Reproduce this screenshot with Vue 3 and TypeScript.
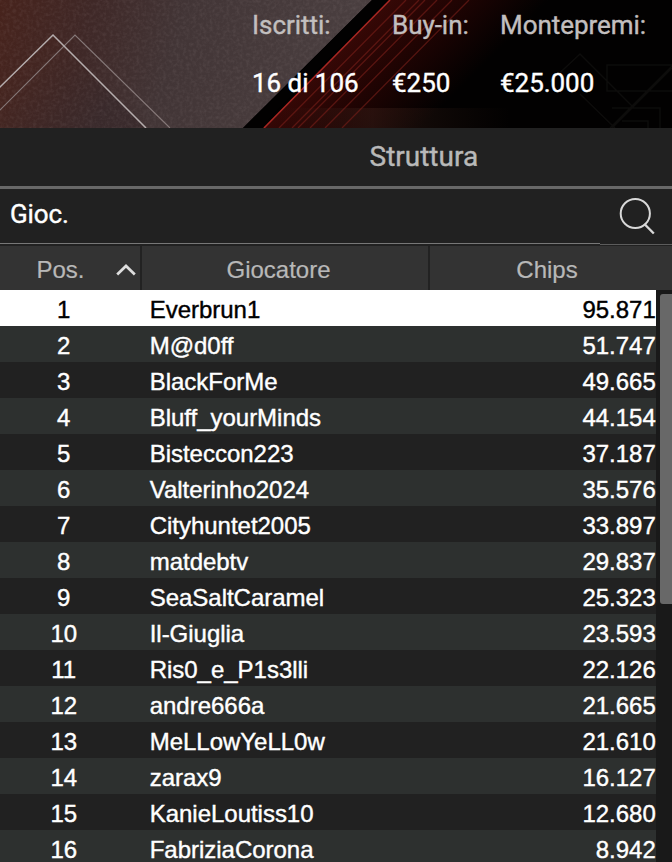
<script setup lang="ts">
interface Player {
  name: string
  chips: string
}

interface Stat {
  label: string
  value: string
}

const stats: Stat[] = [
  { label: 'Iscritti:', value: '16 di 106' },
  { label: 'Buy-in:', value: '€250' },
  { label: 'Montepremi:', value: '€25.000' },
]

const players: Player[] = [
  { name: 'Everbrun1', chips: '95.871' },
  { name: 'M@d0ff', chips: '51.747' },
  { name: 'BlackForMe', chips: '49.665' },
  { name: 'Bluff_yourMinds', chips: '44.154' },
  { name: 'Bisteccon223', chips: '37.187' },
  { name: 'Valterinho2024', chips: '35.576' },
  { name: 'Cityhuntet2005', chips: '33.897' },
  { name: 'matdebtv', chips: '29.837' },
  { name: 'SeaSaltCaramel', chips: '25.323' },
  { name: 'Il-Giuglia', chips: '23.593' },
  { name: 'Ris0_e_P1s3lli', chips: '22.126' },
  { name: 'andre666a', chips: '21.665' },
  { name: 'MeLLowYeLL0w', chips: '21.610' },
  { name: 'zarax9', chips: '16.127' },
  { name: 'KanieLoutiss10', chips: '12.680' },
  { name: 'FabriziaCorona', chips: '8.942' },
]

// Offsets of the thin red stripes from the edge of the grey panel
const stripes = [16, 29, 35, 47, 62, 79]
</script>

<template>
  <main class="lobby">
    <header class="banner">
      <svg class="art" viewBox="0 0 672 128" preserveAspectRatio="none" aria-hidden="true">
        <defs>
          <linearGradient id="panel" x1="0" y1="0" x2="1" y2="0.1">
            <stop offset="0" stop-color="#47231c" />
            <stop offset="0.25" stop-color="#3f2827" />
            <stop offset="0.5" stop-color="#423536" />
            <stop offset="1" stop-color="#4a3f40" />
          </linearGradient>
          <linearGradient id="red" gradientUnits="userSpaceOnUse" x1="325" y1="64" x2="405" y2="144">
            <stop offset="0" stop-color="#360806" />
            <stop offset="0.4" stop-color="#220403" />
            <stop offset="1" stop-color="#020101" />
          </linearGradient>
          <linearGradient id="glow" x1="0" y1="0" x2="1" y2="0">
            <stop offset="0" stop-color="#3a1e18" stop-opacity="0" />
            <stop offset="0.4" stop-color="#3a1e18" stop-opacity="0.5" />
            <stop offset="1" stop-color="#2a1810" stop-opacity="0" />
          </linearGradient>
          <linearGradient id="peak" x1="0" y1="0" x2="0.9" y2="0.4">
            <stop offset="0" stop-color="#4a241c" stop-opacity="0.7" />
            <stop offset="1" stop-color="#38292b" stop-opacity="0.8" />
          </linearGradient>
          <filter id="grain" x="0" y="0" width="100%" height="100%">
            <feTurbulence type="fractalNoise" baseFrequency="0.3" numOctaves="2" seed="4" />
            <feColorMatrix values="0 0 0 0 0.6  0 0 0 0 0.5  0 0 0 0 0.5  0.9 0 0 0 -0.36" />
            <feComposite in2="SourceGraphic" operator="in" />
          </filter>
        </defs>
        <rect width="672" height="128" fill="#020101" />
        <path d="M263 128L390 0H570L443 128Z" fill="url(#red)" />
        <path d="M0 0H372L243 128H0Z" fill="url(#panel)" />
        <path d="M0 87L53 35L146 128H0Z" fill="url(#peak)" />
        <path d="M0 0H372L243 128H0Z" fill="#fff" filter="url(#grain)" opacity="0.22" />
        <path d="M243 128L372 0H387L260 128Z" fill="#020101" />
        <rect x="280" y="108" width="230" height="20" fill="url(#glow)" />
        <path d="M264 128L390 0" stroke="#a82722" stroke-width="1.5" />
        <path
          v-for="offset in stripes"
          :key="offset"
          :d="`M${263 + offset} 128l127 -128`"
          stroke="#7a1f19"
          stroke-width="1.3"
          opacity="0.6"
        />
        <path d="M-1 111L75 35L170 128" fill="none" stroke="#857878" stroke-width="1.2" />
        <path d="M-1 88L53 35L146 128" fill="none" stroke="#b5adad" stroke-width="1.5" />
        <g fill="none" stroke="#0d0c0b" stroke-width="1.5">
          <path d="M672 65H607V91H672M550 82L580 54L632 106L672 66M610 128L632 106M580 94L615 128M612 108H660V128M622 121H648V128M672 68L612 128" />
        </g>
      </svg>
      <dl class="stats">
        <div v-for="stat in stats" :key="stat.label" class="stat">
          <dt>{{ stat.label }}</dt>
          <dd>{{ stat.value }}</dd>
        </div>
      </dl>
    </header>

    <nav class="tabs"><span class="tab">Struttura</span></nav>

    <div class="search">
      <div class="field">Gioc.</div>
      <div class="search-button">
        <svg width="40" height="40" viewBox="0 0 40 40" fill="none" stroke="#d8d8d8" stroke-width="2">
          <circle cx="18.3" cy="17.5" r="14.6" />
          <path d="M27.4 28L36.8 37.5" stroke-width="2.4" />
        </svg>
      </div>
    </div>

    <div class="head">
      <div class="cell head-pos">
        <span>Pos.</span>
        <svg width="20" height="14" viewBox="0 0 20 14" fill="none" stroke="#dedede" stroke-width="2.7">
          <path d="M1.2 11.5L10 3L18.8 11.5" />
        </svg>
      </div>
      <div class="cell head-name">Giocatore</div>
      <div class="cell head-chips">Chips</div>
    </div>

    <section class="body">
      <div class="rows">
        <div
          v-for="(player, index) in players"
          :key="player.name"
          class="row"
          :class="{ selected: index === 0 }"
        >
          <span class="pos">{{ index + 1 }}</span>
          <span class="name">{{ player.name }}</span>
          <span class="chips">{{ player.chips }}</span>
        </div>
      </div>
      <div class="track"><div class="thumb"></div></div>
    </section>
  </main>
</template>

<style>
body {
  margin: 0;
  overflow: hidden;
  background: #212121;
}
</style>

<style scoped>
.lobby {
  display: flex;
  flex-direction: column;
  width: 672px;
  height: 862px;
  overflow: hidden;
  background: #212121;
  color: #fff;
  font-family: 'Liberation Sans', Arial, sans-serif;
  font-size: 24px;
  -webkit-text-stroke: 0.4px currentColor;
}

.banner {
  position: relative;
  flex: none;
  height: 128px;
  overflow: hidden;
}

.art {
  position: absolute;
  inset: 0;
  width: 100%;
  height: 100%;
}

.stats {
  position: relative;
  display: grid;
  grid-template-columns: 140px 108px 172px;
  margin: 0;
  padding: 10px 0 0 252px;
  font-family: Roboto, sans-serif;
  font-size: 26px;
  line-height: 30px;
  letter-spacing: -0.04px;
  white-space: nowrap;
}

.stat dt {
  color: #c2bfbf;
}

.stat dd {
  margin: 28px 0 0;
}

.tabs {
  flex: none;
  height: 58px;
  box-sizing: border-box;
  padding-left: 369.5px;
  color: #b9b9b9;
  font-family: Roboto, sans-serif;
  font-size: 28px;
  line-height: 57px;
}

.search {
  display: flex;
  flex: none;
  box-sizing: border-box;
  height: 60px;
  border-top: 3px solid #686868;
  background: #212121;
}

.field {
  box-sizing: border-box;
  width: 600px;
  height: 55px;
  padding-left: 10px;
  border-bottom: 1px solid #777;
  font-family: Roboto, sans-serif;
  font-size: 26px;
  line-height: 50px;
  letter-spacing: -0.1px;
}

.search-button {
  box-sizing: border-box;
  width: 72px;
  height: 56px;
  padding: 7px 0 0 17px;
  border-bottom: 1px solid #5c5c5c;
}

.head {
  display: grid;
  flex: none;
  grid-template-columns: 142px 288px 242px;
  height: 44px;
  background: #333;
  color: #b8b8b8;
  line-height: 48px;
  -webkit-text-stroke-width: 0.2px;
}

.cell {
  box-sizing: border-box;
  border-right: 2px solid #222;
  text-align: center;
}

.head-pos {
  display: flex;
  align-items: center;
  justify-content: space-between;
  padding: 0 4px 0 36.5px;
}

.head-name {
  padding-right: 13px;
}

.head-chips {
  padding-right: 8px;
  border-right: 0;
}

.body {
  display: flex;
  flex: 1;
  min-height: 0;
}

.rows {
  width: 656px;
}

.row {
  display: grid;
  grid-template-columns: 127.5px 1fr auto;
  height: 36px;
  line-height: 39px;
  background: #212121;
}

.row:nth-child(even) {
  background: #2d302f;
}

.row.selected {
  background: #fff;
  color: #000;
}

.pos {
  text-align: center;
}

.name {
  padding-left: 22.2px;
  letter-spacing: -0.02px;
}

.chips {
  padding-right: 0.2px;
}

.track {
  box-sizing: border-box;
  flex: 1;
  padding: 4px 0 0 4px;
  background: #191919;
}

.thumb {
  height: 310px;
  border-radius: 3px 0 0 3px;
  background: #686868;
}
</style>
